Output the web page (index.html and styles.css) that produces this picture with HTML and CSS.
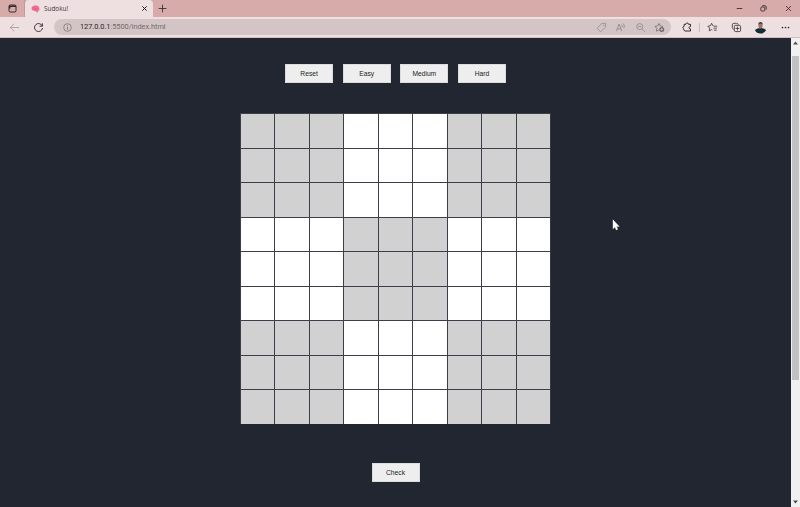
FILE: index.html
```html
<!DOCTYPE html>
<html lang="en">
<head>
<meta charset="utf-8">
<title>Sudoku!</title>
<link rel="stylesheet" href="styles.css">
</head>
<body>
<header class="tabs">
  <div class="workspace">
    <svg width="9" height="9" viewBox="0 0 9 9"><rect x="1" y="1" width="7" height="7" rx="1.3" fill="none" stroke="#302a2b" stroke-width="1"/><path d="M1 1.500h7v1.500H1zM1 3h1.500v1.500H1z" fill="#302a2b"/></svg>
  </div>
  <div class="tab">
    <svg width="9" height="8" viewBox="0 0 9 8"><path d="M.6 4C.2 2.400 1.200 1.200 2.500 1 3.600-.1 5.400 0 6.200.8 7.600 1 8.600 2.300 8.400 3.800 8.800 5 8 5.700 7.200 5.700L7 7.500 5.800 7.600 5 6C3.800 6.500 3 6 2.700 5.600 1.600 5.700.8 5.100.6 4Z" fill="#ed7095"/><path d="M2 3.500Q3 2 4 3.200T6.500 3M3.500 5Q5 4 6.200 5" fill="none" stroke="#d94f7c" stroke-width=".5"/></svg>
    <span class="title">Sudoku!</span>
    <svg width="7" height="7" viewBox="0 0 7 7"><path d="M1.300 1.300l4.400 4.400M5.700 1.300L1.300 5.700" stroke="#252122" stroke-width="1"/></svg>
  </div>
  <svg class="new" width="9" height="9" viewBox="0 0 9 9"><path d="M4.500.7v7.600M.7 4.500h7.600" stroke="#3d3031" stroke-width=".9"/></svg>
  <div class="window">
    <svg width="9" height="9" viewBox="0 0 9 9"><path d="M1.700 4.500h5.600" stroke="#3d3031" stroke-width=".9"/></svg>
    <svg width="9" height="9" viewBox="0 0 9 9"><rect x="1.800" y="3" width="4" height="4" rx=".9" fill="none" stroke="#3d3031" stroke-width=".9"/><path d="M3.200 1.700H6Q7.200 1.700 7.200 3v2.600" fill="none" stroke="#3d3031" stroke-width=".9"/></svg>
    <svg width="9" height="9" viewBox="0 0 9 9"><path d="M2 2l5 5M7 2L2 7" stroke="#3d3031" stroke-width=".9"/></svg>
  </div>
</header>
<nav class="toolbar">
  <svg class="back" width="11" height="11" viewBox="0 0 11 11"><path d="M10 5.500H1.300M5.200 1.700L1.300 5.500l3.900 3.800" fill="none" stroke="#aa9d9f" stroke-width=".9"/></svg>
  <svg class="reload" width="11" height="11" viewBox="0 0 11 11"><path d="M9.300 4.200A4 4 0 1 0 9.500 6M9.400 1.300v2.900H6.500" fill="none" stroke="#383234" stroke-width=".95"/></svg>
  <div class="address">
    <svg width="9" height="9" viewBox="0 0 9 9"><circle cx="4.500" cy="4.500" r="3.800" fill="none" stroke="#75696b" stroke-width=".7"/><path d="M4.500 4v2.600M4.500 2.300v.8" stroke="#75696b" stroke-width=".8"/></svg>
    <span class="url"><b>127.0.0.1</b>:5500/index.html</span>
    <div class="actions">
      <svg width="11" height="11" viewBox="0 0 11 11"><path d="M5.800 1.500L9.300 1.300q.5 0 .5.500L9.500 5.200 5.300 9.200q-.6.600-1.200 0L1.600 6.800q-.6-.6 0-1.200z" fill="none" stroke="#908485" stroke-width=".75"/><circle cx="7.700" cy="3.300" r=".6" fill="#908485"/></svg>
      <svg width="11" height="11" viewBox="0 0 11 11"><path d="M1.300 9.200L4.100 2l2.800 7.200M2.200 6.800h3.700M6.500 2.800q1.200 1 .5 2.500M8.200 1.500q2 2 .7 4.500" fill="none" stroke="#908485" stroke-width=".8"/></svg>
      <svg width="11" height="11" viewBox="0 0 11 11"><circle cx="4.700" cy="4.600" r="3" fill="none" stroke="#908485" stroke-width=".8"/><path d="M3.200 4.600h3M6.900 6.800l3 3" stroke="#908485" stroke-width=".8"/></svg>
      <svg width="11" height="11" viewBox="0 0 11 11"><path d="M4.800 8L2.400 9.200l.4-2.800L1 4.400l2.700-.5L5 1.500l1.300 2.400 2.700.5" fill="none" stroke="#75696b" stroke-width=".8"/><circle cx="7.700" cy="7.400" r="2.500" fill="#75696b"/><path d="M7.700 6v2.800M6.300 7.400h2.800" stroke="#d5c8c9" stroke-width=".7"/></svg>
    </div>
  </div>
  <div class="tools">
    <svg width="11" height="11" viewBox="0 0 11 11"><path d="M2.200 2.300h1.700q.1-1.300 1.300-1.300t1.300 1.300h2v2.200q-1.500.1-1.500 1.200t1.500 1.200V9H3.200Q2 9 1.800 7.500V6.900Q.9 6.500.9 5.500t1.300-1.200z" fill="none" stroke="#2f2a2c" stroke-width="1"/></svg>
    <i class="divider"></i>
    <svg width="11" height="11" viewBox="0 0 11 11"><path d="M6.700 3.900L5.900 3.800 4.600 1.300 3.400 3.800l-2.600.4 1.900 1.900-.5 2.800 2.400-1.300.8.400M7 4.200h3.200M6.500 6.200h3.400M7 8.200h2.700" fill="none" stroke="#383234" stroke-width=".8"/></svg>
    <svg width="11" height="11" viewBox="0 0 11 11"><rect x="3.300" y="3.300" width="6.300" height="6.300" rx="1.400" fill="none" stroke="#383234" stroke-width=".85"/><path d="M2.700 7.300Q1.300 7 1.300 5.500V3q0-1.700 1.700-1.700h2.500Q7 1.300 7.400 2.600M6.450 4.600v3.700M4.600 6.450h3.700" fill="none" stroke="#383234" stroke-width=".8"/></svg>
    <svg class="avatar" width="13" height="13" viewBox="0 0 13 13"><circle cx="6.500" cy="6.500" r="6" fill="#e7e3e3"/><path d="M.9 9Q3 7 6.500 7t5.600 2Q10.500 12.600 6.500 12.600T.9 9Z" fill="#172b36"/><ellipse cx="6.500" cy="4.500" rx="2.100" ry="2.900" fill="#a96e66"/><path d="M4.300 4Q4.100 1 6.500 1t2.200 3L8 2.700H5z" fill="#4b3434"/></svg>
    <svg width="11" height="11" viewBox="0 0 11 11"><g fill="#302a2c"><circle cx="2.500" cy="5.500" r=".85"/><circle cx="5.500" cy="5.500" r=".85"/><circle cx="8.500" cy="5.500" r=".85"/></g></svg>
  </div>
</nav>
<div class="viewport">
  <main>
    <div class="buttons"><button>Reset</button><button>Easy</button><button>Medium</button><button>Hard</button></div>
    <div class="board"></div>
    <button class="check">Check</button>
  </main>
  <aside class="scrollbar">
    <svg width="5" height="4" viewBox="0 0 5 4"><path d="M2.500.5L5 3.500H0z" fill="#4e4e4e"/></svg>
    <div class="thumb"></div>
    <svg class="down" width="5" height="4" viewBox="0 0 5 4"><path d="M2.500 3.500L5 .5H0z" fill="#4e4e4e"/></svg>
  </aside>
</div>
<svg class="cursor" width="8" height="12" viewBox="0 0 8 12"><path d="M1 .8v9l2-1.800 1.200 2.900 1.500-.7L4.500 7.400h2.700z" fill="#fff" stroke="#fff" stroke-width=".4"/></svg>
<script src="board.js"></script>
</body>
</html>
```
FILE: styles.css
```css
* { box-sizing: border-box; }
body { margin: 0; height: 507px; overflow: hidden; display: flex; flex-direction: column; background: #222630; font-family: "Open Sans", "Noto Sans", sans-serif; }
svg { display: block; flex: none; }
.tabs { height: 17px; flex: none; display: flex; align-items: center; background: #d6abaa; }
.workspace { width: 25px; height: 17px; padding: 4px 0 0 8px; border-right: 1px solid #c39a9a; }
.tab { width: 128px; height: 17px; display: flex; align-items: center; padding: 0 5px 0 6px; background: #eedfe0; border-radius: 4px 4px 0 0; }
.title { flex: 1; margin-left: 4px; font-size: 6.400px; line-height: 10px; color: #403739; }
.new { margin-left: 5px; }
.window { margin-left: auto; display: flex; gap: 15.500px; padding-right: 7.500px; }
.toolbar { height: 21px; flex: none; display: flex; align-items: center; background: #eedfe0; border-bottom: 1px solid #cfbfc3; padding-left: 9px; }
.reload { margin-left: 13px; }
.address { width: 617px; height: 16px; margin-left: 10px; border-radius: 8px; background: #d3c5c6; display: flex; align-items: center; padding: 0 6px 0 9px; }
.url { margin-left: 8px; font: 7.400px/12px Roboto, "Open Sans", sans-serif; letter-spacing: -.04px; color: #75696b; }
.url b { font-weight: 400; color: #292425; }
.actions { margin-left: auto; display: flex; gap: 8.300px; }
.tools { flex: 1; display: flex; align-items: center; padding-left: 11px; }
.divider { width: 1px; height: 9px; margin: 0 7px 0 6px; background: #c7babb; }
.tools svg + svg { margin-left: 13px; }
.tools svg + .avatar { margin-left: 12px; }
.tools .avatar + svg { margin-left: 13px; }
.viewport { flex: 1; display: flex; min-height: 0; }
main { width: 791px; display: flex; flex-direction: column; align-items: center; padding-top: 26px; }
.buttons { display: flex; gap: 9.600px; }
button { width: 48px; height: 19px; border: 1px solid #dcdcde; background: #efeeef; color: #222; padding: 0; font: 6.700px/17px "Liberation Sans", Arial, sans-serif; }
.board { width: 311px; height: 311px; margin-top: 30px; display: grid; grid-template: repeat(9, 1fr) / repeat(9, 1fr); border-right: 1px solid #343842; }
.cell { background: #fff; border-left: 1px solid #3c3f49; border-top: 1px solid #3c3f49; }
.shaded { background: #d1d1d1; }
.check { margin-top: 39px; }
.scrollbar { width: 9px; background: #f0f0f0; display: flex; flex-direction: column; align-items: center; padding: 3px 0; }
.thumb { width: 7px; height: 324px; margin-top: 11px; background: #c1c1c1; }
.down { margin-top: auto; }
.cursor { position: absolute; left: 612px; top: 219px; }
```
FILE: board.js
```js
const board = document.querySelector(".board");
for (let row = 0; row < 9; row++) {
  for (let col = 0; col < 9; col++) {
    const cell = document.createElement("div");
    const block = Math.floor(row / 3) + Math.floor(col / 3);
    cell.className = block % 2 === 0 ? "cell shaded" : "cell";
    board.append(cell);
  }
}
```
